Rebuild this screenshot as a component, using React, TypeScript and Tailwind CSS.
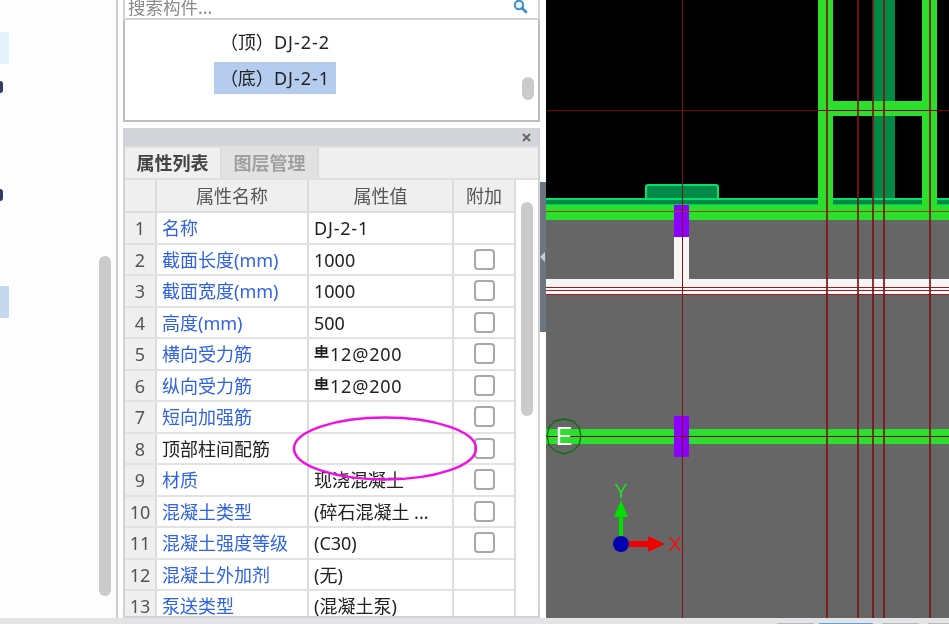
const rows = [
  { no: 1, name: "名称", value: "DJ-2-1", add: false, wide: true },
  { no: 2, name: "截面长度(mm)", value: "1000", add: true },
  { no: 3, name: "截面宽度(mm)", value: "1000", add: true },
  { no: 4, name: "高度(mm)", value: "500", add: true },
  { no: 5, name: "横向受力筋", value: "12@200", add: true, rebar: true, wide: true },
  { no: 6, name: "纵向受力筋", value: "12@200", add: true, rebar: true, wide: true },
  { no: 7, name: "短向加强筋", value: "", add: true },
  { no: 8, name: "顶部柱间配筋", value: "", add: true, plain: true },
  { no: 9, name: "材质", value: "现浇混凝土", add: true },
  { no: 10, name: "混凝土类型", value: "(碎石混凝土 ...", add: true },
  { no: 11, name: "混凝土强度等级", value: "(C30)", add: true },
  { no: 12, name: "混凝土外加剂", value: "(无)", add: false },
  { no: 13, name: "泵送类型", value: "(混凝土泵)", add: false },
];

function RebarMark() {
  return (
    <svg width="15" height="15" viewBox="0 0 15 15" className="mr-px shrink-0 -translate-y-[2px]">
      <path d="M2.5 3h10v5.5h-10zM2.5 5.8h10M7.5 0v12M0.5 11.8h14" fill="none" stroke="#1c1c1c" strokeWidth="1.7" />
    </svg>
  );
}

function Canvas() {
  const reds = [136, 280, 311, 326, 337, 383];
  return (
    <svg width="403" height="618" viewBox="546 0 403 618" className="block">
      <rect x="546" y="0" width="403" height="220" fill="#000" />
      <rect x="546" y="220" width="403" height="398" fill="#666" />

      {/* teal column and footing */}
      <rect x="873" y="0" width="22" height="198" fill="#008a45" />
      <rect x="646" y="185" width="72" height="16" rx="2" fill="#008a45" stroke="#00e070" strokeWidth="2" />
      <rect x="546" y="198" width="403" height="7" fill="#008a45" />
      <rect x="546" y="198" width="403" height="2" fill="#00e070" />
      <rect x="546" y="204" width="403" height="1" fill="#00c860" />

      {/* green frame */}
      <rect x="546" y="205" width="403" height="15" fill="#2ddf2d" />
      <rect x="818" y="0" width="15" height="220" fill="#2ddf2d" />
      <rect x="922" y="0" width="15" height="220" fill="#2ddf2d" />
      <rect x="818" y="101" width="119" height="15" fill="#2ddf2d" />
      <rect x="546" y="429" width="403" height="15" fill="#2ddf2d" />

      {/* white slab strip */}
      <rect x="674" y="237" width="15" height="46" fill="#f6f6f6" />
      <rect x="546" y="279" width="403" height="16" fill="#f6f6f6" />

      {/* purple columns */}
      <rect x="674" y="205" width="15" height="32" fill="#8b00ff" />
      <rect x="674" y="416" width="15" height="41" fill="#8b00ff" />

      {/* axis lines */}
      <rect x="546" y="110" width="403" height="1" fill="#800000" />
      <rect x="546" y="211" width="403" height="1" fill="#8a4a10" />
      <rect x="546" y="287" width="403" height="1" fill="#9a1c1c" />
      <rect x="546" y="290" width="403" height="1" fill="#9a1c1c" />
      <rect x="546" y="294" width="403" height="1" fill="#9a1c1c" />
      <rect x="546" y="436" width="403" height="1" fill="#800000" />
      {reds.map((x) => (
        <rect key={x} x={546 + x} y="0" width={x === 136 ? 1 : 2} height="618" fill="#7d1515" opacity={x === 136 ? 1 : 0.85} />
      ))}

      {/* axis bubble */}
      <polygon
        points="564,419 573,421 579,427 581,436 579,445 573,451 564,454 555,451 549,445 547,436 549,427 555,421"
        fill="none"
        stroke="#0c6f0c"
        strokeWidth="1.4"
      />
      <text x="564" y="445" textAnchor="middle" fontSize="25" fill="#fff" fontFamily="'Liberation Sans', sans-serif">
        E
      </text>

      {/* ucs icon */}
      <rect x="619" y="515" width="4" height="29" fill="#00e000" />
      <polygon points="621,500 628,517 614,517" fill="#00e000" />
      <rect x="629" y="541" width="20" height="6" fill="#f00000" />
      <polygon points="665,544 648,536 648,552" fill="#f00000" />
      <circle cx="621" cy="544" r="8" fill="#0000b0" />
      <text x="621" y="498" textAnchor="middle" fontSize="20" fill="#22dd22" fontFamily="'Liberation Sans', sans-serif">
        Y
      </text>
      <text x="675" y="551" textAnchor="middle" fontSize="20" fill="#f01010" fontFamily="'Liberation Sans', sans-serif">
        X
      </text>
    </svg>
  );
}

export default function App() {
  return (
    <div
      className="relative flex h-[624px] w-[949px] flex-col overflow-hidden bg-white text-[#222] blur-[0.4px]"
      style={{ fontFamily: "'Noto Sans', 'Noto Sans CJK SC', sans-serif" }}
    >
      <div className="flex h-[618px] min-h-0">
        {/* left tree panel */}
        <aside className="flex w-[118px] shrink-0 justify-between border-r-2 border-[#c9ccd2] bg-[#fdfdfd] pr-[5px]">
          <div className="w-[9px] pt-[32px]">
            <div className="h-[32px] bg-[#e4f0fc]" />
            <div className="mt-[17px] h-[12px] w-[3px] rounded-r-full bg-[#333a66]" />
            <div className="mt-[96px] h-[12px] w-[3px] rounded-r-full bg-[#333a66]" />
            <div className="mt-[85px] h-[32px] bg-[#c6d8f0]" />
          </div>
          <div className="mt-[256px] h-[340px] w-[12px] rounded-full bg-[#cbcbcb]" />
        </aside>

        {/* middle panel */}
        <section className="ml-[5px] flex w-[417px] shrink-0 flex-col">
          <div className="flex h-[20px] shrink-0 items-end justify-between overflow-hidden border-x-2 border-b-2 border-[#d0d2d5] pl-[3px] pr-[10px]">
            <span className="text-[17.5px] leading-[21px] text-[#8a8a8a]">搜索构件...</span>
            <svg width="16" height="14" viewBox="0 0 16 14" className="mb-[4px]">
              <circle cx="7" cy="5" r="4.2" fill="#e8f4fb" stroke="#3f8fc0" strokeWidth="2" />
              <path d="M10 8l4 4" stroke="#3f8fc0" strokeWidth="2.6" strokeLinecap="round" />
            </svg>
          </div>
          <div className="relative h-[102px] shrink-0 border-x-2 border-b-2 border-[#bdbdbd] bg-white">
            <div className="flex flex-col items-start pl-[89px] pt-[6px] text-[18px]">
              <div className="flex h-[32px] w-[122px] items-center justify-center whitespace-nowrap">
                （顶）<span className="tracking-[1px]">DJ-2-2</span>
              </div>
              <div className="mt-[4px] flex h-[32px] w-[122px] items-center justify-center whitespace-nowrap bg-[#b4cdee]">
                （底）<span className="tracking-[1px]">DJ-2-1</span>
              </div>
            </div>
            <div className="absolute right-[4px] top-[57px] h-[23px] w-[12px] rounded-full bg-[#cbcbcb]" />
          </div>

          <div className="mt-[6px] flex min-h-0 flex-1 flex-col overflow-hidden border-x-2 border-t border-b-2 border-[#d0d2d5] bg-white">
            <div className="flex h-[17px] shrink-0 items-center justify-end bg-[#d3d5da] pr-[7px]">
              <svg width="9" height="9" viewBox="0 0 9 9">
                <path d="M1 1l7 7M8 1l-7 7" stroke="#666" strokeWidth="2" />
              </svg>
            </div>
            <div className="flex h-[34px] shrink-0 border-y-2 border-[#e0e0e0] bg-[#efefef] text-[18px] leading-[30px]">
              <div className="w-[97px] border-r-2 border-[#dcdcdc] text-center font-bold text-[#444]">属性列表</div>
              <div className="w-[97px] border-r-2 border-[#dcdcdc] bg-[#e2e2e2] text-center font-bold text-[#a0a0a0]">图层管理</div>
            </div>
            <div className="relative flex min-h-0 flex-1">
              <div className="w-[391px] shrink-0 border-r-2 border-[#dcdcdc] text-[18px]">
                <div className="grid h-[33px] grid-cols-[32px_152px_145px_1fr] grid-rows-[31px] border-b-2 border-[#dcdcdc] bg-[#efefef] text-center leading-[33px] text-[#555]">
                  <div className="border-r-2 border-[#dcdcdc]" />
                  <div className="border-r-2 border-[#dcdcdc]">属性名称</div>
                  <div className="border-r-2 border-[#dcdcdc]">属性值</div>
                  <div>附加</div>
                </div>
                {rows.map((row) => (
                  <div
                    key={row.no}
                    className="grid h-[31.5px] grid-cols-[32px_152px_145px_1fr] grid-rows-[29.5px] border-b-2 border-[#e2e2e2] leading-[31px]"
                  >
                    <div className="border-r-2 border-[#dcdcdc] bg-[#efefef] text-center text-[#555]">{row.no}</div>
                    <div className={`whitespace-nowrap border-r-2 border-[#dcdcdc] pl-[5px] ${row.plain ? "text-[#222]" : "text-[#2f62ea]"}`}>
                      {row.name}
                    </div>
                    <div className={`flex items-center whitespace-nowrap border-r-2 border-[#dcdcdc] pl-[5px] pt-[2px] ${row.wide ? "tracking-[0.8px]" : ""}`}>
                      {row.rebar && <RebarMark />}
                      {row.value}
                    </div>
                    <div className="flex items-center justify-center">
                      {row.add && <div className="h-[21px] w-[21px] rounded-[4px] border-2 border-[#a8a8a8] bg-white" />}
                    </div>
                  </div>
                ))}
              </div>
              <div className="flex-1 pl-[5px] pt-[22px]">
                <div className="h-[214px] w-[12px] rounded-full bg-[#cbcbcb]" />
              </div>
            </div>
          </div>
        </section>

        {/* splitter */}
        <div className="flex w-[6px] shrink-0 flex-col">
          <div className="h-[182px] bg-white" />
          <div className="flex h-[150px] items-center bg-[#6b7680]">
            <div className="h-0 w-0 border-y-[5px] border-r-[5px] border-y-transparent border-r-[#c8ccd0]" />
          </div>
        </div>

        <Canvas />
      </div>

      {/* status strip */}
      <div className="flex h-[6px] shrink-0 items-end bg-[#e4e4e6] pl-[777px]">
        <div className="h-px w-[37px] bg-[#b9b9b9]" />
        <div className="ml-[5px] h-px w-[54px] bg-[#5aa5e6]" />
        <div className="ml-[9px] h-px w-[37px] bg-[#b9b9b9]" />
        <div className="ml-[9px] h-px w-[21px] bg-[#b9b9b9]" />
      </div>

      {/* hand-drawn annotation */}
      <svg width="949" height="624" className="pointer-events-none absolute left-0 top-0">
        <ellipse cx="385" cy="448.5" rx="91" ry="31" fill="none" stroke="#f010e0" strokeWidth="2.5" />
      </svg>
    </div>
  );
}
